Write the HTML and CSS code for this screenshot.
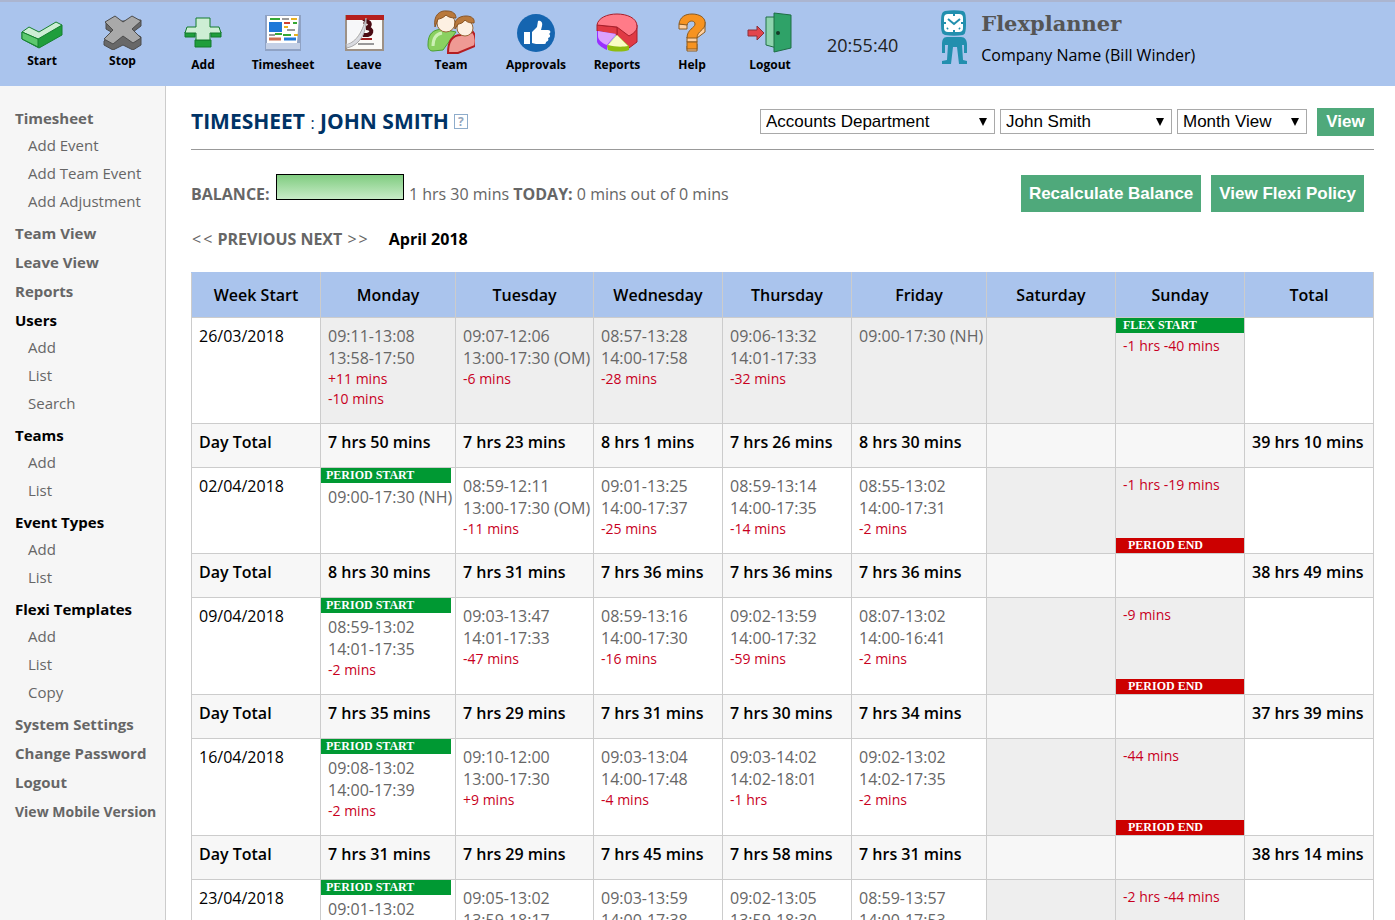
FILE: index.html
```html
<!DOCTYPE html>
<html lang="en">
<head>
    <meta charset="UTF-8">
    <meta name="viewport" content="width=device-width, initial-scale=1.0">
    <title>Flexplanner - Timesheet</title>
    <link rel="stylesheet" href="styles.css">
</head>
<body>
    <header class="topbar">
        <nav class="toolbar">
            <a href="#" class="tool">
                <svg class="icon-short" viewBox="0 0 48 40">
                    <path d="M4 22v7l17 9 23-13v-10L20 28z" fill="#1f9e3c" stroke="#158030"/>
                    <path d="M4 22l7-5 10 5 17-10 6 3-24 14z" fill="#cdeed4" stroke="#158030"/>
                    <path d="M4 22v7l16 8v-8z" fill="#5cc86e" stroke="#158030"/>
                </svg>
                <span>Start</span>
            </a>
            <a href="#" class="tool">
                <svg class="icon-short" viewBox="0 0 48 40">
                    <path d="M7 12v7l7 4-9 8v4l9 5 10-5 10 5 8-5v-8l-8-5 8-6v-6z" fill="#686868" stroke="#4c4c4c"/>
                    <path d="M16 6l8 6 9-6 9 5-9 8 9 9-8 5-10-7-10 8-9-5 9-9-8-8z" fill="#a9a9a9" stroke="#4c4c4c"/>
                </svg>
                <span>Stop</span>
            </a>
            <a href="#" class="tool">
                <svg viewBox="0 0 48 44">
                    <path d="M6 22h10v5H6zM32 22h10v5H32zM16 30h16v7H16z" fill="#1f9e3c" stroke="#127a2c"/>
                    <path d="M17 8h14v9h9l2 6H31v7H17v-7H6l2-6h9z" fill="#cdeed4" stroke="#127a2c"/>
                </svg>
                <span>Add</span>
            </a>
            <a href="#" class="tool">
                <svg viewBox="0 0 48 44">
                    <path d="M6 5h36v36H6z" fill="#8fa2c4"/>
                    <path d="M7 33h34v6H7z" fill="#c4d0e6"/>
                    <path d="M8 6h32l-2 27H8z" fill="#fff"/>
                    <path d="M11 9h10M16 24h7" stroke="#35a835" stroke-width="2"/>
                    <rect x="10" y="12" width="13" height="10" fill="#1e78d8"/>
                    <path d="M23 9h7M28 20h8M10 25h6" stroke="#999" stroke-width="2"/>
                    <path d="M32 9h6M25 17h4M35 25h4" stroke="#e8b020" stroke-width="2"/>
                    <path d="M25 13h6" stroke="#d04030" stroke-width="2"/>
                    <path d="M34 13h4M24 25h8" stroke="#35a835" stroke-width="2"/>
                    <path d="M10 29h12" stroke="#d07050" stroke-width="3"/>
                    <path d="M25 29h12" stroke="#1e78d8" stroke-width="3"/>
                </svg>
                <span>Timesheet</span>
            </a>
            <a href="#" class="tool">
                <svg viewBox="0 0 48 44">
                    <rect x="6" y="6" width="37" height="34" fill="#fbfbf8" stroke="#9d9186" stroke-width="2"/>
                    <rect x="6" y="5" width="38" height="5" fill="#b5201e"/>
                    <path d="M23 12c8-2 9 5 3 6 8 0 7 8-3 7" fill="none" stroke="#4a0c12" stroke-width="4"/>
                    <path d="M19 29h13" stroke="#a02020" stroke-width="2"/>
                    <path d="M18 34h16" stroke="#999" stroke-width="2"/>
                    <path d="M6 34C14 34 22 24 26 8c1 13-5 27-19 30z" fill="#d9dbe0" stroke="#a9a9ac"/>
                    <path d="M7 10v24C14 32 20 22 24 11z" fill="#f6f7f9"/>
                </svg>
                <span>Leave</span>
            </a>
            <a href="#" class="tool">
                <svg viewBox="0 0 48 44">
                    <path d="M1 35c0-12 5-15 14-16l14 3-13 18-10 1c-3 0-5-2-5-6z" fill="#8ad060" stroke="#4aa030"/>
                    <path d="M6 36c0-8 3-12 9-13" fill="none" stroke="#cdf0b5" stroke-width="3"/>
                    <circle cx="19" cy="13" r="9" fill="#fdf0e2" stroke="#9a6a3a"/>
                    <path d="M8 17C6 5 13 0 20 1c6 0 9 3 9 7-5 0-8-1-10-3-3 3-6 4-8 4z" fill="#b9793c" stroke="#8a5525"/>
                    <path d="M21 43c0-13 5-18 13-18l12-3c3 4 3 10 2 14L31 43z" fill="#ef9a94" stroke="#b41e22" stroke-width="2"/>
                    <circle cx="38" cy="18" r="8" fill="#fdf0e2" stroke="#9a6a3a"/>
                    <path d="M28 19c-2-9 4-13 11-13 6 0 9 3 8 7-5 0-7-1-9-3-2 3-5 4-7 4z" fill="#b9793c" stroke="#8a5525"/>
                </svg>
                <span>Team</span>
            </a>
            <a href="#" class="tool">
                <svg viewBox="0 0 48 44">
                    <circle cx="24" cy="23" r="19" fill="#1565b0"/>
                    <path d="M12 22h6v12h-6z" fill="#fff"/>
                    <path d="M20 22l5-5 1-6c3-1 5 2 4 5l-1 4h7c3 0 3 3 1 4 2 1 1 4-1 4 1 2 0 3-2 4 0 2-1 2-3 2h-7l-4-1z" fill="#fff"/>
                </svg>
                <span>Approvals</span>
            </a>
            <a href="#" class="tool">
                <svg viewBox="0 0 48 44">
                    <path d="M24 17v9l12 12 8-6V15z" fill="#e03a44" stroke="#a81f2a"/>
                    <path d="M4 15v6l20 4v-8z" fill="#e03a44" stroke="#a81f2a"/>
                    <path d="M4 15C5 8 14 4 24 4s20 4 20 12c0 5-3 7-8 10L24 17z" fill="#ff7b88" stroke="#a81f2a"/>
                    <path d="M4 21l19 3-9 12v4C8 37 4 34 4 31z" fill="#9a30ff"/>
                    <path d="M5 21l18 3-9 11C8 33 5 29 5 26z" fill="#dba2ff"/>
                    <path d="M14 36l10-11 12 11v4c-5 2-16 2-21 0z" fill="#8fbc10"/>
                    <path d="M15 35l9-10 11 11c-5 1-13 1-20-1z" fill="#fafcc4"/>
                </svg>
                <span>Reports</span>
            </a>
            <a href="#" class="tool">
                <svg viewBox="0 0 48 44">
                    <path d="M11 14v5h8v-5zM19 27v5h10v-4l8-6V12l-8 10zM19 36v5h10v-7z" fill="#ffd0a0" stroke="#8a5a20"/>
                    <path d="M11 14C12 7 17 4 24 4c8 0 14 4 13 10 0 6-8 7-8 14H19c0-9 8-10 8-14 0-4-7-4-8 1z" fill="#f79320" stroke="#8a5a20"/>
                    <rect x="19" y="32" width="10" height="7" fill="#f79320" stroke="#8a5a20"/>
                </svg>
                <span>Help</span>
            </a>
            <a href="#" class="tool">
                <svg viewBox="0 0 48 44">
                    <path d="M20 7h11v31l-11-3z" fill="#8ed4ae" stroke="#1f6e45"/>
                    <path d="M28 3l17 2v33l-17 4z" fill="#2fa268" stroke="#1f6e45"/>
                    <circle cx="32" cy="23" r="2" fill="#143c28"/>
                    <path d="M2 20h9v-4l7 7-7 7v-4H2z" fill="#e2454d" stroke="#8c3038"/>
                </svg>
                <span>Logout</span>
            </a>
        </nav>
        <div class="clock">20:55:40</div>
        <div class="brand">
            <svg class="brand-logo" viewBox="0 0 28 56">
                <path d="M5 1c6-1 12-1 18 0 2 1 3 3 3 12s-1 11-3 12c-6 1-12 1-18 0-3-1-4-3-4-12S2 2 5 1z" fill="#228fae"/>
                <rect x="4" y="4" width="19" height="18" rx="4" fill="#fff"/>
                <path d="M8 9l6 5 6-5M14 4v2M14 20v2M4 13h2M21 13h2M7 19l1-1M20 19l-1-1" fill="none" stroke="#228fae" stroke-width="2"/>
                <path d="M7 27h14c4 0 6 3 6 8v8h-3v-8h-2l1 15 4 1v3h-8l-2-17h-4l-2 17H2v-3l5-1 1-15H5v8H2v-8c0-5 1-8 5-8z" fill="#228fae"/>
            </svg>
            <div>
                <div class="brand-name">Flexplanner</div>
                <div class="company">Company Name (Bill Winder)</div>
            </div>
        </div>
    </header>

    <div class="page">
        <nav class="sidebar">
            <ul>
                <li><a href="#">Timesheet</a>
                    <ul>
                        <li><a href="#">Add Event</a></li>
                        <li><a href="#">Add Team Event</a></li>
                        <li><a href="#">Add Adjustment</a></li>
                    </ul>
                </li>
                <li><a href="#">Team View</a></li>
                <li><a href="#">Leave View</a></li>
                <li><a href="#">Reports</a></li>
                <li><span>Users</span>
                    <ul>
                        <li><a href="#">Add</a></li>
                        <li><a href="#">List</a></li>
                        <li><a href="#">Search</a></li>
                    </ul>
                </li>
                <li><span>Teams</span>
                    <ul>
                        <li><a href="#">Add</a></li>
                        <li><a href="#">List</a></li>
                    </ul>
                </li>
                <li><span>Event Types</span>
                    <ul>
                        <li><a href="#">Add</a></li>
                        <li><a href="#">List</a></li>
                    </ul>
                </li>
                <li><span>Flexi Templates</span>
                    <ul>
                        <li><a href="#">Add</a></li>
                        <li><a href="#">List</a></li>
                        <li><a href="#">Copy</a></li>
                    </ul>
                </li>
                <li><a href="#">System Settings</a></li>
                <li><a href="#">Change Password</a></li>
                <li><a href="#">Logout</a></li>
                <li><a href="#" class="mobile-link">View Mobile Version</a></li>
            </ul>
        </nav>

        <main class="content">
            <div class="title-row">
                <h1>Timesheet <span>:</span> John Smith</h1>
                <a href="#" class="hint" aria-label="Help">?</a>
                <form class="filters">
                    <select class="department" aria-label="Department">
                        <option>Accounts Department</option>
                    </select>
                    <select class="person" aria-label="Employee">
                        <option>John Smith</option>
                    </select>
                    <select class="period" aria-label="View">
                        <option>Month View</option>
                    </select>
                    <button type="button" class="btn btn-small">View</button>
                </form>
            </div>

            <div class="balance-row">
                <div class="balance">
                    <b>BALANCE:</b>
                    <span class="bar"></span>
                    1 hrs 30 mins <b>TODAY:</b> 0 mins out of 0 mins
                </div>
                <div class="actions">
                    <button type="button" class="btn">Recalculate Balance</button>
                    <button type="button" class="btn">View Flexi Policy</button>
                </div>
            </div>

            <div class="month-nav">
                <a href="#"><span>&lt;</span><span>&lt;</span> <b>PREVIOUS</b></a>
                <a href="#"><b>NEXT</b> <span>&gt;</span><span>&gt;</span></a>
                <strong>April 2018</strong>
            </div>

            <table class="timesheet">
                <colgroup>
                    <col class="c-normal">
                    <col class="c-wide">
                    <col class="c-wider">
                    <col class="c-normal">
                    <col class="c-normal">
                    <col class="c-wide">
                    <col class="c-normal">
                    <col class="c-normal">
                    <col class="c-normal">
                </colgroup>
                <thead>
                    <tr>
                        <th>Week Start</th>
                        <th>Monday</th>
                        <th>Tuesday</th>
                        <th>Wednesday</th>
                        <th>Thursday</th>
                        <th>Friday</th>
                        <th>Saturday</th>
                        <th>Sunday</th>
                        <th>Total</th>
                    </tr>
                </thead>
                <tbody>
                    <tr>
                        <td class="week">26/03/2018</td>
                        <td class="off">09:11-13:08<br>13:58-17:50<div class="adj">+11 mins<br>-10 mins</div></td>
                        <td class="off">09:07-12:06<br>13:00-17:30 (OM)<div class="adj">-6 mins</div></td>
                        <td class="off">08:57-13:28<br>14:00-17:58<div class="adj">-28 mins</div></td>
                        <td class="off">09:06-13:32<br>14:01-17:33<div class="adj">-32 mins</div></td>
                        <td class="off">09:00-17:30 (NH)</td>
                        <td class="off"></td>
                        <td class="off"><div class="flag flex-start">FLEX START</div><div class="adj">-1 hrs -40 mins</div></td>
                        <td></td>
                    </tr>
                    <tr class="total">
                        <td>Day Total</td>
                        <td>7 hrs 50 mins</td>
                        <td>7 hrs 23 mins</td>
                        <td>8 hrs 1 mins</td>
                        <td>7 hrs 26 mins</td>
                        <td>8 hrs 30 mins</td>
                        <td></td>
                        <td></td>
                        <td>39 hrs 10 mins</td>
                    </tr>
                    <tr>
                        <td class="week">02/04/2018</td>
                        <td><div class="flag">PERIOD START</div>09:00-17:30 (NH)</td>
                        <td>08:59-12:11<br>13:00-17:30 (OM)<div class="adj">-11 mins</div></td>
                        <td>09:01-13:25<br>14:00-17:37<div class="adj">-25 mins</div></td>
                        <td>08:59-13:14<br>14:00-17:35<div class="adj">-14 mins</div></td>
                        <td>08:55-13:02<br>14:00-17:31<div class="adj">-2 mins</div></td>
                        <td class="off"></td>
                        <td class="off"><div class="adj">-1 hrs -19 mins</div><div class="flag-end">PERIOD END</div></td>
                        <td></td>
                    </tr>
                    <tr class="total">
                        <td>Day Total</td>
                        <td>8 hrs 30 mins</td>
                        <td>7 hrs 31 mins</td>
                        <td>7 hrs 36 mins</td>
                        <td>7 hrs 36 mins</td>
                        <td>7 hrs 36 mins</td>
                        <td></td>
                        <td></td>
                        <td>38 hrs 49 mins</td>
                    </tr>
                    <tr>
                        <td class="week">09/04/2018</td>
                        <td><div class="flag">PERIOD START</div>08:59-13:02<br>14:01-17:35<div class="adj">-2 mins</div></td>
                        <td>09:03-13:47<br>14:01-17:33<div class="adj">-47 mins</div></td>
                        <td>08:59-13:16<br>14:00-17:30<div class="adj">-16 mins</div></td>
                        <td>09:02-13:59<br>14:00-17:32<div class="adj">-59 mins</div></td>
                        <td>08:07-13:02<br>14:00-16:41<div class="adj">-2 mins</div></td>
                        <td class="off"></td>
                        <td class="off"><div class="adj">-9 mins</div><div class="flag-end">PERIOD END</div></td>
                        <td></td>
                    </tr>
                    <tr class="total">
                        <td>Day Total</td>
                        <td>7 hrs 35 mins</td>
                        <td>7 hrs 29 mins</td>
                        <td>7 hrs 31 mins</td>
                        <td>7 hrs 30 mins</td>
                        <td>7 hrs 34 mins</td>
                        <td></td>
                        <td></td>
                        <td>37 hrs 39 mins</td>
                    </tr>
                    <tr>
                        <td class="week">16/04/2018</td>
                        <td><div class="flag">PERIOD START</div>09:08-13:02<br>14:00-17:39<div class="adj">-2 mins</div></td>
                        <td>09:10-12:00<br>13:00-17:30<div class="adj">+9 mins</div></td>
                        <td>09:03-13:04<br>14:00-17:48<div class="adj">-4 mins</div></td>
                        <td>09:03-14:02<br>14:02-18:01<div class="adj">-1 hrs</div></td>
                        <td>09:02-13:02<br>14:02-17:35<div class="adj">-2 mins</div></td>
                        <td class="off"></td>
                        <td class="off"><div class="adj">-44 mins</div><div class="flag-end">PERIOD END</div></td>
                        <td></td>
                    </tr>
                    <tr class="total">
                        <td>Day Total</td>
                        <td>7 hrs 31 mins</td>
                        <td>7 hrs 29 mins</td>
                        <td>7 hrs 45 mins</td>
                        <td>7 hrs 58 mins</td>
                        <td>7 hrs 31 mins</td>
                        <td></td>
                        <td></td>
                        <td>38 hrs 14 mins</td>
                    </tr>
                    <tr>
                        <td class="week">23/04/2018</td>
                        <td><div class="flag">PERIOD START</div>09:01-13:02</td>
                        <td>09:05-13:02<br>13:59-18:17</td>
                        <td>09:03-13:59<br>14:00-17:38</td>
                        <td>09:02-13:05<br>13:59-18:30</td>
                        <td>08:59-13:57<br>14:00-17:53</td>
                        <td class="off"></td>
                        <td class="off"><div class="adj">-2 hrs -44 mins</div></td>
                        <td></td>
                    </tr>
                </tbody>
            </table>
        </main>
    </div>
</body>
</html>
```
FILE: styles.css
```css
* {
    box-sizing: border-box;
}
body {
    margin: 0;
    font-family: "Open Sans", "Noto Sans", sans-serif;
    font-size: 16px;
    line-height: 22px;
    color: #666;
    background: #fff;
}
a {
    color: inherit;
    text-decoration: none;
}
b {
    font-weight: 700;
}
ul {
    list-style: none;
    margin: 0;
    padding: 0;
}

/* top bar */
.topbar {
    display: flex;
    height: 86px;
    padding-left: 2px;
    background: #aac4ed;
    border-top: 2px solid #abb5d0;
    color: #000;
}
.toolbar {
    display: grid;
    grid-template-columns: 80px 81px 80px 80px 82px 92px 78px 84px 66px 90px;
    padding-top: 8px;
}
.tool {
    display: flex;
    flex-direction: column;
    align-items: center;
    font-size: 12px;
    font-weight: 700;
}
.tool svg {
    width: 48px;
    height: 44px;
}
.tool .icon-short {
    height: 40px;
}
.clock {
    padding: 32px 0 0 12px;
    font-size: 18px;
    color: #222;
}
.brand {
    display: flex;
    gap: 13px;
    padding: 8px 0 0 42px;
}
.brand-logo {
    width: 28px;
    height: 56px;
}
.brand-name {
    font-family: "DejaVu Serif", serif;
    font-size: 21px;
    font-weight: 700;
    line-height: 28px;
    color: #555;
}
.company {
    margin-top: 6px;
}

/* sidebar */
.page {
    display: flex;
}
.sidebar {
    flex: 0 0 166px;
    padding: 18px 0 20px 15px;
    background: #f6f6f6;
    border-right: 1px solid #ccc;
    font-size: 15px;
    line-height: 29px;
    font-weight: 700;
    white-space: nowrap;
}
.sidebar span {
    color: #000;
}
.sidebar ul ul {
    margin-top: -2px;
    padding: 0 0 4px 13px;
    font-weight: 400;
    line-height: 28px;
}
.sidebar .mobile-link {
    font-size: 14px;
}

/* content */
.content {
    flex: 1;
    padding: 20px 21px 0 25px;
}
.title-row {
    display: flex;
    align-items: center;
    height: 44px;
    padding-bottom: 12px;
    border-bottom: 1px solid #999;
}
h1 {
    margin: 0;
    font-size: 21px;
    font-weight: 700;
    text-transform: uppercase;
    color: #036;
}
h1 span {
    font-size: 16px;
    font-weight: 400;
}
.hint {
    width: 14px;
    height: 15px;
    margin-left: 5px;
    border: 1px solid #8eaccb;
    font-size: 12px;
    font-weight: 700;
    line-height: 13px;
    text-align: center;
    color: #93a5bd;
}
.filters {
    display: flex;
    align-items: center;
    gap: 5px;
    margin-left: auto;
}
select {
    appearance: none;
    height: 25px;
    padding: 0 5px;
    border: 1px solid #a9a9a9;
    border-radius: 0;
    background: #fff url("data:image/svg+xml,%3Csvg xmlns='http://www.w3.org/2000/svg' width='8' height='8'%3E%3Cpath d='M0 0h8L4 8z'/%3E%3C/svg%3E") no-repeat right 7px center;
    font-family: "Liberation Sans", Arial, sans-serif;
    font-size: 17px;
    color: #000;
}
.department {
    width: 235px;
}
.person {
    width: 172px;
}
.period {
    width: 130px;
}
.btn {
    height: 37px;
    padding: 0 8px;
    border: 0;
    background: #4fa97b;
    font-family: "Liberation Sans", Arial, sans-serif;
    font-size: 17px;
    font-weight: 700;
    color: #fff;
}
.btn-small {
    width: 57px;
    height: 28px;
    margin-left: 5px;
}
.balance-row {
    display: flex;
    justify-content: space-between;
    padding: 25px 10px 0 0;
}
.balance {
    padding-top: 8px;
}
.bar {
    display: inline-block;
    width: 128px;
    height: 26px;
    margin: -10px 1px 0 2px;
    border: 1px solid #000;
    background: linear-gradient(#80cc80, #c8ecc8);
}
.actions {
    display: flex;
    gap: 10px;
}
.month-nav {
    display: flex;
    gap: 4px;
    padding: 16px 0 22px;
}
.month-nav span {
    margin: 0 1px;
}
.month-nav strong {
    margin-left: 16px;
    color: #000;
}

/* timesheet table */
.timesheet {
    width: 100%;
    table-layout: fixed;
    border-collapse: collapse;
}
.c-normal {
    width: 129px;
}
.c-wide {
    width: 135px;
}
.c-wider {
    width: 138px;
}
th {
    height: 45px;
    padding: 0;
    border: 1px solid #ccc;
    border-top-color: #aac4ed;
    background: #aac4ed;
    font-weight: 600;
    color: #000;
}
td {
    position: relative;
    padding: 7px 0 14px 7px;
    border: 1px solid #ccc;
    vertical-align: top;
    white-space: nowrap;
}
.week {
    color: #000;
}
.off {
    background: #eee;
}
.total td {
    height: 44px;
    padding-bottom: 0;
    background: #f7f7f7;
    font-weight: 600;
    color: #000;
}
.adj {
    font-size: 14px;
    line-height: 20px;
    color: #c8001e;
}
.flag,
.flag-end {
    height: 15px;
    font: bold 12px/15px "Liberation Serif", serif;
    color: #fff;
}
.flag {
    margin: -7px 4px 3px -7px;
    padding-left: 5px;
    background: #093;
}
.flex-start {
    margin-right: 0;
    padding-left: 7px;
}
.flag-end {
    position: absolute;
    left: 0;
    right: 0;
    bottom: 0;
    padding-left: 12px;
    background: #c00;
}
```
